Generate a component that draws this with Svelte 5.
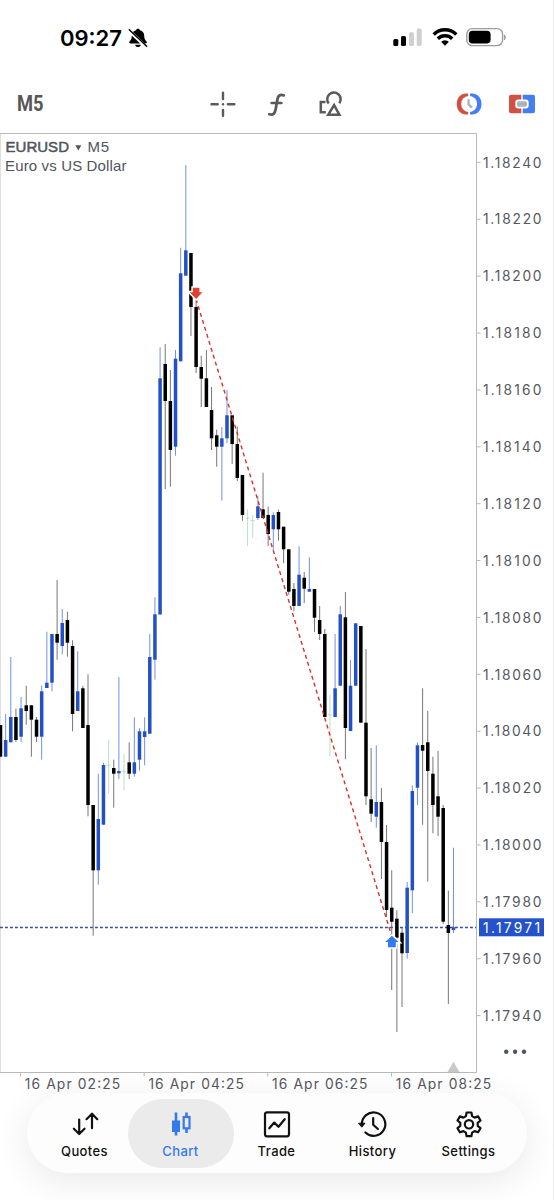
<script>
	// Vertical positions on the plot: [direction, high, body top, body bottom, low]
	const candles = [
		['down', 725, 725, 756.7, 756.7],
		['up', 714, 740, 756.7, 756.7],
		['up', 657, 717, 742.3, 742.3],
		['down', 708.7, 717, 740, 742],
		['up', 697, 708.3, 736.7, 742],
		['down', 685.7, 705.3, 711, 724.7],
		['down', 705.3, 705.3, 719.7, 756.7],
		['down', 717, 719.7, 736.7, 742],
		['up', 685.7, 691.3, 736.7, 759.7],
		['up', 631.7, 682.7, 688, 688],
		['up', 634, 634, 682.7, 691.3],
		['down', 580, 634, 642.7, 659.7],
		['up', 609, 623, 646, 654.3],
		['down', 611.7, 620, 642.7, 656.7],
		['down', 640.3, 646, 714, 731.3],
		['up', 651.3, 691.3, 711, 711],
		['down', 685.7, 688.3, 728, 728],
		['down', 674.3, 725, 805, 816.3],
		['down', 805, 805, 870.3, 935.7],
		['up', 773.7, 819, 870.3, 884.7],
		['up', 762.7, 765, 824.7, 824.7],
		['flat', 740, 765.3, 765.3, 793.7],
		['down', 759.7, 768, 773.7, 807.7],
		['up', 677, 771, 773.3, 779],
		['flat', 754, 771.3, 771.3, 790.7],
		['down', 742.3, 762.3, 773.7, 779],
		['up', 717.3, 762.3, 773.7, 776.7],
		['up', 728.3, 731.3, 759.7, 770.7],
		['up', 717.3, 731.3, 737, 765.3],
		['up', 634, 657, 733.7, 733.7],
		['up', 597.3, 614.3, 659.7, 679.7],
		['up', 347.3, 378.3, 614.5, 614.5],
		['down', 344, 364, 401, 489],
		['down', 370, 401, 450, 486.7],
		['up', 350, 358.7, 446.7, 455.7],
		['up', 247.7, 273.3, 361.3, 361.3],
		['up', 165, 250.3, 275.7, 275.7],
		['down', 253, 253, 307, 336],
		['down', 296, 307, 367, 373],
		['down', 355.7, 367, 378.7, 407],
		['down', 350, 378.3, 407, 407],
		['down', 387, 410, 438.3, 450],
		['down', 429.7, 435.3, 446.7, 466.7],
		['up', 427, 438.3, 446.7, 500.7],
		['up', 390, 415.3, 438.3, 443.3],
		['down', 415.3, 415.3, 444, 464],
		['down', 426.7, 444, 478, 481],
		['down', 475, 475, 515, 520.7],
		['flat', 509.3, 518.3, 518.3, 546],
		['flat', 515, 520.7, 520.7, 538],
		['up', 495.7, 506.3, 518, 520],
		['down', 472.7, 509.3, 518, 518],
		['down', 506.7, 515, 534, 546],
		['up', 512.3, 515, 529.3, 550],
		['down', 509.7, 512, 529.3, 540.7],
		['down', 526.7, 526.7, 549.3, 563.3],
		['down', 549.3, 549.3, 591.7, 594.7],
		['down', 583, 589, 606, 611.3],
		['up', 546.3, 574.7, 606, 606],
		['down', 572, 577.7, 588.7, 603],
		['up', 557.3, 589, 591.7, 591.7],
		['down', 589, 589, 617.7, 632],
		['down', 606, 620, 634, 640],
		['down', 629, 634, 717, 717],
		['flat', 694.7, 714.7, 714.7, 756.7],
		['up', 634, 688.3, 717, 717],
		['up', 606, 614.3, 685.7, 685.7],
		['down', 592, 617.3, 728, 759.3],
		['up', 660, 685.7, 731, 731],
		['up', 623.3, 623.3, 685.7, 685.7],
		['down', 626, 626, 722.7, 722.7],
		['down', 649, 722.7, 796.3, 805],
		['down', 748, 799.3, 813.7, 822],
		['up', 745.3, 802, 816.7, 827.7],
		['down', 788, 802, 842, 879],
		['down', 825, 842, 910, 917],
		['down', 870.3, 907.7, 921.7, 990],
		['down', 910.3, 918.7, 937.7, 1032],
		['down', 927.7, 932.7, 953.3, 1007],
		['up', 882, 887.7, 953, 958.7],
		['up', 785.3, 791, 890.3, 913],
		['up', 742.3, 745.3, 787.7, 805],
		['down', 688.3, 745, 750.7, 824.7],
		['down', 711, 742.3, 771, 881.7],
		['down', 756.7, 773.7, 805, 833.3],
		['down', 751, 796.3, 816.7, 836],
		['down', 805, 808, 921.7, 924],
		['down', 890.7, 925, 933, 1004],
		['up', 847.7, 927.3, 930, 933]
	];

	const step = 5.1477;
	const candleX = (i) => 0.5 + i * step;

	const prices = Array.from({ length: 16 }, (_, i) => ({
		label: (1.1824 - i * 0.0002).toFixed(5),
		y: 162.4 + i * 56.88
	}));

	const times = [
		{ label: '16 Apr 02:25', x: 20.5 },
		{ label: '16 Apr 04:25', x: 144.2 },
		{ label: '16 Apr 06:25', x: 267.8 },
		{ label: '16 Apr 08:25', x: 391.5 }
	];

	const tabs = ['Quotes', 'Chart', 'Trade', 'History', 'Settings'];
	let active = $state('Chart');
</script>

<div class="screen">
	<header class="status">
		<div class="clock">
			<span class="time">09:27</span>
			<svg width="20" height="20" viewBox="0 0 20 20">
				<path d="M10 .8c1 0 1.800.6 1.900 1.400 2.800.7 4.300 2.800 4.300 5.400 0 3.200.7 4.300 2.300 6 .6.700.3 1.800-.7 1.800H2.200c-1 0-1.300-1.100-.7-1.800 1.600-1.700 2.300-2.800 2.300-6 0-2.600 1.500-4.700 4.300-5.400C8.200 1.400 9 .8 10 .8zM7.200 16.800h5.600c-.3 1.500-1.400 2.300-2.800 2.300s-2.500-.8-2.800-2.300z" fill="#000" />
				<path d="M.9 2.500l17.300 16.500" stroke="#fff" stroke-width="3.300" />
				<path d="M1.300 1.700L18.700 18.300" stroke="#000" stroke-width="1.500" stroke-linecap="round" />
			</svg>
		</div>
		<div class="signals">
			<svg width="30" height="20" viewBox="0 0 30 20">
				<rect x="0.300" y="12" width="5" height="7" rx="1.500" />
				<rect x="8" y="9" width="5" height="10" rx="1.500" />
				<rect x="16" y="5.200" width="5" height="13.800" rx="1.500" fill="#d0d0d0" />
				<rect x="23.700" y="1.500" width="5" height="17.500" rx="1.500" fill="#d0d0d0" />
			</svg>
			<svg width="26" height="20" viewBox="0 0 26 20">
				<g fill="none" stroke="#000" stroke-width="3.500">
					<path d="M1.700 7.500a16 16 0 0 1 22.600 0" />
					<path d="M5.800 11.700a10.200 10.200 0 0 1 14.400 0" />
				</g>
				<path d="M13 18.700l-3.900-3.900a5.500 5.500 0 0 1 7.800 0z" />
			</svg>
			<svg width="41" height="20" viewBox="0 0 41 20">
				<rect x="0.800" y="1.600" width="35.800" height="17" rx="5.600" fill="none" stroke="#9c9c9c" stroke-width="1.400" />
				<rect x="2.800" y="3.700" width="21.800" height="12.800" rx="3.800" />
				<path d="M38 7.500c2.400 1 2.400 4.700 0 5.700z" fill="#9c9c9c" />
			</svg>
		</div>
	</header>

	<div class="toolbar">
		<svg class="timeframe" width="40" height="30" viewBox="0 0 40 30">
			<text x="0" y="22.300" textLength="26.500" lengthAdjust="spacingAndGlyphs">M5</text>
		</svg>
		<div class="tools">
			<svg width="28" height="28" viewBox="0 0 28 28" fill="none" stroke="#5a5a5a" stroke-width="2.400" stroke-linecap="round">
				<path d="M2.500 14.300h6.200M18.900 14.300h6.500M14 2.800v6.300M14 20v5.800" />
				<path d="M14 14.300h.01" stroke-width="2.400" />
			</svg>
			<svg width="28" height="28" viewBox="0 0 28 28" fill="none" stroke="#5a5a5a" stroke-width="2.800" stroke-linecap="round">
				<path d="M20.800 5.400c-3.900-1.200-5.700.1-6.400 4l-1.700 9.700c-.8 4.600-2.600 6.500-6.400 5.200" />
				<path d="M8.500 13h10" stroke-width="2.400" />
			</svg>
			<svg width="28" height="28" viewBox="0 0 28 28" fill="none" stroke="#5a5a5a" stroke-width="2.500">
				<path d="M11.700 13.500a6.700 6.700 0 1 1 10.600-.2" />
				<path d="M17.100 15l5.300 9.800H11.200z" />
				<path d="M8.500 12H3.800v10.200h5" />
			</svg>
		</div>
		<div class="trade-tools">
			<svg width="28" height="24" viewBox="0 0 28 24">
				<path d="M13.200 1.500h-2C5.500 1.500 1.700 6 1.700 12s3.800 10.500 9.500 10.500h2z" fill="#cf5143" />
				<path d="M15 1.500h2c5.700 0 9.500 4.500 9.500 10.500S22.700 22.500 17 22.500h-2z" fill="#437fee" />
				<circle cx="14.100" cy="12" r="8" fill="#fff" />
				<path d="M13.600 7.200v5.200l3.400 3.300" fill="none" stroke="#a9b1ba" stroke-width="2.300" />
			</svg>
			<svg width="28" height="24" viewBox="0 0 28 24">
				<path d="M13.300 2.700H3a2 2 0 0 0-2 2v14.500a2 2 0 0 0 2 2h10.300z" fill="#cf5143" />
				<path d="M14.700 2.700H25a2 2 0 0 1 2 2v14.500a2 2 0 0 1-2 2H14.700z" fill="#437fee" />
				<rect x="7.300" y="7.500" width="13.400" height="9" rx="3" fill="#fff" />
				<rect x="9" y="9.300" width="10" height="5.400" rx="2" fill="#a9b1ba" />
			</svg>
		</div>
	</div>

	<svg class="chart" width="554" height="960" viewBox="0 133 554 960">
		<path d="M0.500 133V1072" stroke="#dedede" />
		<path d="M0 133.500H476.500V1072.500H0" fill="none" stroke="#b9b9b9" />

		<text class="symbol" x="5.500" y="152.300" textLength="63.500">EURUSD</text>
		<path d="M75.300 145.200h6l-3 5.200z" fill="#50545c" />
		<text class="caption" x="87.500" y="152.300" textLength="21.500">M5</text>
		<text class="caption" x="5" y="171.300" textLength="121.500">Euro vs US Dollar</text>

		<path d="M0 927.500H476" stroke="#2f4fb4" stroke-width="1.300" stroke-dasharray="2.900 2.100" />

		{#each candles as [kind, high, top, bottom, low], i}
			<g class={kind}>
				<line x1={candleX(i)} x2={candleX(i)} y1={high} y2={low} />
				{#if kind === 'flat'}
					<line x1={candleX(i) - 2} x2={candleX(i) + 2} y1={top} y2={top} />
				{:else}
					<rect x={candleX(i) - 1.75} y={top} width="3.500" height={bottom - top} />
				{/if}
			</g>
		{/each}

		<path d="M196 299L391.700 936" stroke="#d8332d" stroke-width="1.400" stroke-dasharray="4 3.300" />
		<g stroke="#fff" stroke-width="3" paint-order="stroke">
			<path d="M192.800 287.700h6.600v4.600h3.100l-6.400 6.600-6.400-6.600h3.100z" fill="#db4330" />
			<path d="M391.900 935.700l6.700 6.300h-2.800v5.300h-7.800v-5.300h-2.800z" fill="#3579ee" />
		</g>

		<path d="M447.500 1072l6-10.300 6 10.300z" fill="#c9c9c9" />

		{#each prices as price}
			<path d="M477 {price.y}h3.500" stroke="#b9b9b9" />
			<text class="axis" x="483" y={price.y + 5.2} textLength="58.500">{price.label}</text>
		{/each}
		<rect x="479" y="918.300" width="65" height="18" fill="#2452cb" />
		<text class="axis current" x="483" y="932.500" textLength="57">1.17971</text>

		<g fill="#50545c">
			<circle cx="506.200" cy="1051.800" r="2.200" />
			<circle cx="515.100" cy="1051.800" r="2.200" />
			<circle cx="524" cy="1051.800" r="2.200" />
		</g>

		{#each times as time}
			<path d="M{time.x} 1073v3.500" stroke="#b9b9b9" />
			<text class="axis" x={time.x + 4.200} y="1088.700" textLength="95.500">{time.label}</text>
		{/each}
	</svg>

	<nav class="tabbar">
		{#each tabs as tab}
			<button class="tab" class:active={active === tab} onclick={() => (active = tab)}>
				<svg width="30" height="30" viewBox="0 0 30 30" fill="none" stroke="currentColor" stroke-width="2.200" stroke-linecap="round" stroke-linejoin="round">
					{#if tab === 'Quotes'}
						<path d="M9.200 10.500v14.300M3.900 19.700l5.300 5.300 5.300-5.300M22 19.200V5M16.500 10.200L22 4.700l5.300 5.500" />
					{:else if tab === 'Chart'}
						<g stroke-linecap="butt" stroke-linejoin="miter">
							<path d="M10 3.500v23M20.500 3.500v4.500M20.500 19.500v4.500" stroke-width="2.600" />
							<rect x="6" y="11.500" width="8" height="11.500" fill="currentColor" stroke="none" />
							<rect x="17.700" y="8" width="5.800" height="11.300" stroke-width="2.200" />
						</g>
					{:else if tab === 'Trade'}
						<rect x="3" y="3.300" width="24" height="24" rx="2" />
						<path d="M7.300 19.300l5-5.700 4.200 4.200 6.200-7.600" />
					{:else if tab === 'History'}
						<path d="M3.900 15.700a11.700 11.700 0 1 1 3.500 7.800" />
						<path d="M1 14.200h6l-3 3.700z" fill="currentColor" stroke-width="1" />
						<path d="M15.200 9v6.700l4.700 4.300" />
					{:else}
						<path d="M12.600 3.500h4.800l.7 3.600 2.500 1.500 3.500-1.200 2.400 4.100-2.800 2.400v2.900l2.800 2.400-2.400 4.100-3.500-1.200-2.500 1.500-.7 3.600h-4.800l-.7-3.600-2.500-1.500-3.500 1.200-2.400-4.100 2.800-2.400v-2.900l-2.800-2.400 2.400-4.100 3.500 1.200 2.500-1.500z" />
						<circle cx="15" cy="15.300" r="4.200" />
					{/if}
				</svg>
				<span>{tab}</span>
			</button>
		{/each}
	</nav>
</div>

<style>
	:global(body) {
		background: #fff;
	}

	.screen {
		box-sizing: border-box;
		width: 554px;
		height: 1200px;
		display: flex;
		flex-direction: column;
		overflow: hidden;
		background: #fff;
		box-shadow: inset -1px 0 #ececec;
		font-family: Inter, 'Liberation Sans', sans-serif;
	}

	svg {
		display: block;
		flex: none;
	}

	/* Status bar */
	.status {
		height: 75px;
		flex: none;
		display: flex;
		justify-content: space-between;
		align-items: center;
		padding: 0 47px 0 60px;
	}

	.clock {
		display: flex;
		align-items: center;
		gap: 5px;
	}

	.time {
		width: 63px;
		font-size: 22px;
		font-weight: 600;
		white-space: nowrap;
		color: #000;
	}

	.signals {
		display: flex;
		gap: 8.5px;
		margin-top: -1px;
	}

	/* Toolbar */
	.toolbar {
		height: 58px;
		flex: none;
		display: flex;
		align-items: center;
		padding: 0 18px 0 17px;
	}

	.timeframe text {
		font-family: Roboto, sans-serif;
		font-size: 21.5px;
		font-weight: 700;
		fill: #575757;
	}

	.tools {
		display: flex;
		gap: 26px;
		margin-left: 152px;
	}

	.trade-tools {
		display: flex;
		gap: 25px;
		margin-left: auto;
	}

	/* Chart */
	.up line {
		stroke: #6486d6;
		stroke-width: 0.9;
	}
	.up rect {
		fill: #2350c4;
	}
	.down line {
		stroke: #666;
		stroke-width: 0.9;
	}
	.down rect {
		fill: #000;
	}
	.flat line {
		stroke: #b4dcb8;
		stroke-width: 0.9;
	}

	.symbol,
	.caption {
		font-family: 'Liberation Sans', sans-serif;
		font-size: 15px;
		fill: #50545c;
	}
	.symbol {
		stroke: #50545c;
		stroke-width: 0.5;
	}

	.axis {
		font-size: 13.8px;
		fill: #55585f;
	}
	.current {
		fill: #fff;
	}

	/* Tab bar */
	.tabbar {
		box-sizing: border-box;
		width: 500px;
		height: 80px;
		flex: none;
		display: flex;
		align-items: center;
		padding: 0 5px;
		margin-left: 26.5px;
		border-radius: 40px;
		background: #fdfdfd;
		box-shadow: 0 8px 36px rgba(0, 0, 0, 0.09);
	}

	.tab {
		width: 106px;
		height: 69px;
		margin-right: -10px;
		flex: none;
		display: flex;
		flex-direction: column;
		align-items: center;
		gap: 4px;
		padding: 10px 0 0;
		border: 0;
		border-radius: 35px;
		background: none;
		color: #111;
		font: 500 13px Inter, sans-serif;
		letter-spacing: 0.4px;
	}
	.tab.active {
		background: #ebebeb;
		color: #3579ee;
	}
</style>
